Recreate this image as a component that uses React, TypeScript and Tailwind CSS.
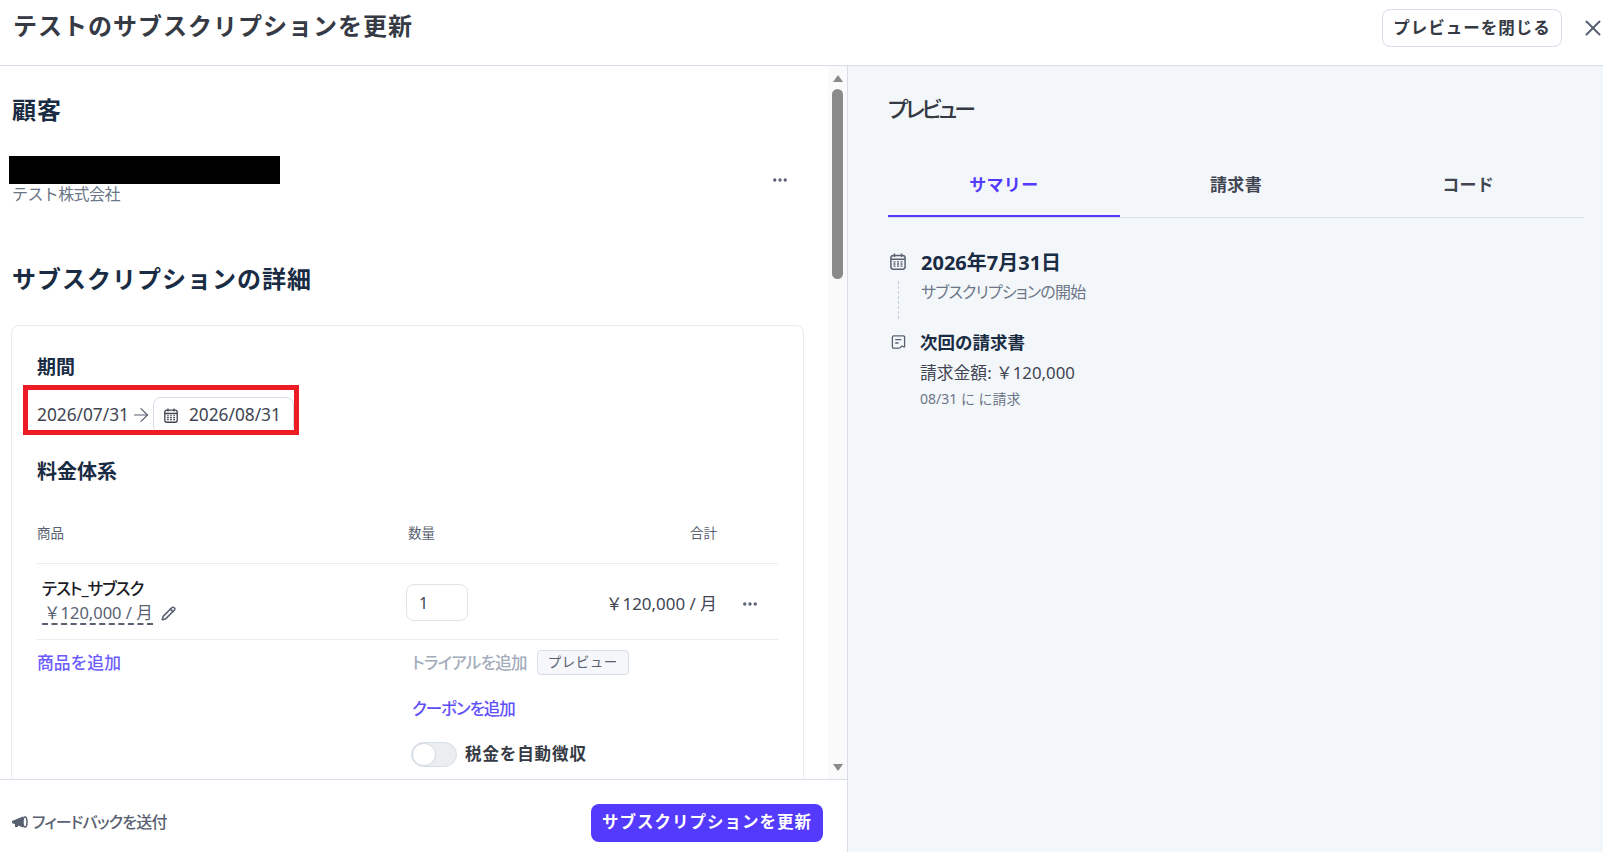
import { ArrowRight, MoreHorizontal, Pencil, X } from "lucide-react"

function CalendarIcon({ className }: { className: string }) {
  return (
    <svg viewBox="0 0 16 17" fill="none" stroke="currentColor" className={className}>
      <rect x="0.9" y="2.400" width="14.2" height="13.800" rx="2.400" strokeWidth="1.500" />
      <path d="M4.500 0.400v3.500M11.500 0.400v3.500M1 6.200h14" strokeWidth="1.500" />
      <path d="M3.500 8.800h2M7 8.800h2M10.500 8.800h2M3.500 11h2M7 11h2M10.500 11h2M3.500 13.200h2M7 13.200h2M10.500 13.200h2" strokeWidth="1.300" />
    </svg>
  )
}

function ReceiptIcon({ className }: { className: string }) {
  return (
    <svg viewBox="0 0 16 16" fill="none" stroke="currentColor" strokeWidth="1.400" className={className}>
      <path d="M2.800 1h10.400a1.300 1.300 0 0 1 1.300 1.300v10.400c-1.200.2-1.600-.9-2.600-.9-1.100 0-1.400 2.200-2.900 2.200H2.800a1.300 1.300 0 0 1-1.300-1.300V2.300A1.300 1.300 0 0 1 2.800 1z" />
      <path d="M4.500 5h6.500M4.500 8.500h3.500" />
    </svg>
  )
}

function Megaphone() {
  return (
    <svg viewBox="0 0 16 12" className="h-3 w-4 text-[#596171]" fill="currentColor">
      <path d="M0 5 11 0.500v11L6 9.600v1.400H3V8.300L0 7z" />
      <ellipse cx="13" cy="6" rx="2" ry="5" fill="none" stroke="currentColor" strokeWidth="1.500" />
    </svg>
  )
}

function FakeScrollbar() {
  return (
    <div className="flex w-[19px] shrink-0 flex-col items-center bg-[#fafafa] pt-[9px] pb-[8px]">
      <div className="h-0 w-0 border-x-[5px] border-b-[7px] border-x-transparent border-b-[#8a8a8a]" />
      <div className="mt-[7px] h-[190px] w-[11px] rounded-full bg-[#8a8a8a]" />
      <div className="flex-1" />
      <div className="h-0 w-0 border-x-[5px] border-t-[7px] border-x-transparent border-t-[#8a8a8a]" />
    </div>
  )
}

export default function App() {
  return (
    <div className="flex h-[852px] w-[1603px] flex-col overflow-hidden bg-white font-['Noto_Sans','Noto_Sans_CJK_JP',sans-serif] text-[#30405a]">
      {/* Header */}
      <header className="flex h-[66px] shrink-0 items-start justify-between border-b border-[#d8dee8] pl-[13px]">
        <h1 className="mt-[9px] text-[24px] leading-[34px] font-bold tracking-[1px] text-[#353a44]">テストのサブスクリプションを更新</h1>
        <div className="-mr-[3px] flex items-center">
          <button className="mt-[9px] h-[38px] w-[180px] rounded-lg border border-[#d8dee8] text-[16.500px] font-bold tracking-[1px] text-[#353a44]">プレビューを閉じる</button>
          <X className="mt-[9px] ml-[18px] h-[26px] w-[26px] shrink-0 text-[#596171]" strokeWidth={1.800} />
        </div>
      </header>

      <div className="flex min-h-0 flex-1">
        {/* Left column */}
        <div className="flex w-[848px] shrink-0 flex-col border-r border-[#d8dee8]">
          <div className="flex min-h-0 flex-1">
            <div className="min-w-0 flex-1 overflow-hidden pr-[24px] pl-[12px]">
              <h2 className="mt-[27px] text-[24px] leading-[34px] font-bold tracking-[1px] text-[#1a2c44]">顧客</h2>
              <div className="mt-[29px] flex items-start justify-between">
                <div>
                  <div className="-ml-[3px] h-[28px] w-[271px] bg-black" />
                  <p className="text-[16px] leading-[20px] tracking-[-0.600px] text-[#6c7688]">テスト株式会社</p>
                </div>
                <MoreHorizontal className="mt-[15px] mr-[15px] h-[18px] w-[18px] text-[#596171]" strokeWidth={2.500} />
              </div>

              <h2 className="mt-[58px] text-[24px] leading-[34px] font-bold tracking-[1px] text-[#1a2c44]">サブスクリプションの詳細</h2>

              <section className="mt-[29px] -ml-px h-[600px] rounded-lg border border-[#e8ebef] px-[25px] pt-[26px]">
                <h3 className="text-[19px] leading-[30px] font-bold text-[#1a2c44]">期間</h3>
                <div className="relative mt-[15px] flex h-[36px] items-center text-[17.300px] text-[#414552]">
                  <span>2026/07/31</span>
                  <ArrowRight className="mx-px h-[22px] w-[22px] text-[#596171]" strokeWidth={1.300} />
                  <div className="flex h-[37px] w-[141px] items-center rounded-lg border border-[#d8dee8] bg-white pl-[10px]">
                    <CalendarIcon className="h-[15px] w-[14px] text-[#414552]" />
                    <span className="ml-[11px]">2026/08/31</span>
                  </div>
                  <div className="absolute -top-[12px] -left-[14px] h-[50px] w-[276px] border-[5px] border-[#ed1c24]" />
                </div>

                <h3 className="mt-[24px] text-[20px] leading-[30px] font-bold text-[#1a2c44]">料金体系</h3>

                <div className="mt-[36px] flex h-[20px] items-center text-[13.500px] text-[#596171]">
                  <span className="w-[371px]">商品</span>
                  <span className="w-[99px]">数量</span>
                  <span className="w-[210px] text-right">合計</span>
                </div>
                <div className="mt-[20px] flex h-[76px] items-center border-t border-[#e8edf3] pt-[2px]">
                  <div className="-mt-[4px] w-[369px] pl-[5px]">
                    <p className="text-[16.500px] leading-[26px] font-medium tracking-[-1px] [font-feature-settings:'palt'] text-[#1a1b25]">テスト_サブスク</p>
                    <div className="flex items-center">
                      <span className="border-b-2 border-dashed border-[#596171] pl-[2px] text-[16.500px] leading-[21px] text-[#596171]">￥120,000 / 月</span>
                      <Pencil className="ml-[8px] h-[15px] w-[15px] text-[#596171]" strokeWidth={2.500} />
                    </div>
                  </div>
                  <div className="flex h-[37px] w-[62px] items-center rounded-lg border border-[#dfe3e8] pl-[12px] text-[16px] text-[#414552]">1</div>
                  <span className="mt-[2px] ml-auto text-[16.900px] text-[#414552]">￥120,000 / 月</span>
                  <MoreHorizontal className="mt-[2px] mr-[19px] ml-[24px] h-[18px] w-[18px] text-[#596171]" strokeWidth={2.500} />
                </div>

                <div className="flex border-t border-[#e8edf3]">
                  <div className="w-[375px] pt-[11px] text-[16.800px] leading-[24px] font-medium text-[#6c5cff]">商品を追加</div>
                  <div className="pt-[10px]">
                    <div className="flex h-[26px] items-center">
                      <span className="text-[16.500px] font-medium tracking-[-0.700px] [font-feature-settings:'palt'] text-[#a3acba]">トライアルを追加</span>
                      <span className="-mt-px ml-[10px] flex h-[25px] w-[92px] items-center justify-center rounded border border-[#d8dee8] bg-[#f5f7fa] text-[13.500px] tracking-[0.500px] text-[#596171]">プレビュー</span>
                    </div>
                    <p className="mt-[21px] text-[16.500px] leading-[24px] font-medium tracking-[-1px] [font-feature-settings:'palt'] text-[#5f4ff7]">クーポンを追加</p>
                    <div className="mt-[21px] -ml-px flex items-center">
                      <div className="flex h-[25px] w-[46px] items-center rounded-full border border-[#d8dee8] bg-[#ebeef1]">
                        <div className="h-[23px] w-[24px] rounded-full border border-[#cfd7e2] bg-white" />
                      </div>
                      <span className="ml-[8px] text-[16.500px] font-bold tracking-[0.900px] text-[#353a44]">税金を自動徴収</span>
                    </div>
                  </div>
                </div>
              </section>
            </div>
            <FakeScrollbar />
          </div>

          {/* Footer */}
          <footer className="flex h-[73px] shrink-0 items-center justify-between border-t border-[#d8dee8] pr-[24px] pl-[12px]">
            <div className="mt-[12px] flex items-center text-[16px] font-medium tracking-[-0.800px] [font-feature-settings:'palt'] text-[#596171]">
              <Megaphone />
              <span className="ml-[4px]">フィードバックを送付</span>
            </div>
            <button className="mt-[13px] h-[38px] w-[232px] rounded-lg bg-[#533afd] text-[16.500px] font-bold tracking-[1px] text-white">サブスクリプションを更新</button>
          </footer>
        </div>

        {/* Preview column */}
        <aside className="min-w-0 flex-1 bg-[#f4f7fa] pr-[19px] pl-[40px]">
          <h2 className="mt-[25px] text-[22px] leading-[34px] font-medium tracking-[-3px] [font-feature-settings:'palt'] text-[#353a44]">プレビュー</h2>
          <div className="mt-[34px] flex h-[59px] border-b border-[#d8dee8] text-[17px] font-bold tracking-[0.300px]">
            <div className="flex w-[232px] items-center justify-center border-b-2 border-[#533afd] pb-[5px] text-[#533afd]">サマリー</div>
            <div className="flex w-[233px] items-center justify-center pb-[7px] text-[#414552]">請求書</div>
            <div className="flex w-[232px] items-center justify-center pb-[7px] text-[#414552]">コード</div>
          </div>

          <div className="mt-[30px] flex">
            <div className="flex w-[33px] flex-col pl-[2px]">
              <CalendarIcon className="mt-[5px] h-[17px] w-[16px] text-[#596171]" />
              <div className="mt-[11px] ml-[8px] h-[38px] border-l border-dashed border-[#c6ced9]" />
            </div>
            <div>
              <p className="text-[20px] leading-[30px] font-bold text-[#1a2c44]">2026年7月31日</p>
              <p className="-mt-px text-[16px] leading-[30px] tracking-[-0.800px] [font-feature-settings:'palt'] text-[#6c7688]">サブスクリプションの開始</p>
            </div>
          </div>

          <div className="mt-[10px] flex">
            <div className="w-[32px] pt-[6px] pl-[3px]">
              <ReceiptIcon className="h-[15px] w-[15px] text-[#596171]" />
            </div>
            <div>
              <p className="text-[17.500px] leading-[26px] font-bold text-[#1a2c44]">次回の請求書</p>
              <p className="mt-[3px] text-[16.800px] leading-[30px] text-[#414552]">請求金額:  ￥120,000</p>
              <p className="-mt-px text-[14px] leading-[24px] text-[#6c7688]">08/31 に に請求</p>
            </div>
          </div>
        </aside>
      </div>
    </div>
  )
}
